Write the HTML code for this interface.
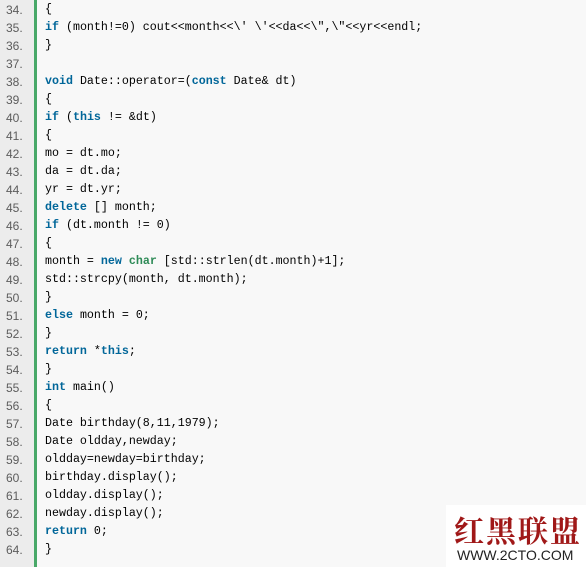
<!DOCTYPE html>
<html><head><meta charset="utf-8"><style>
html,body{margin:0;padding:0;width:586px;height:567px;overflow:hidden;background:#f8f8f8;}
.g{position:absolute;left:0;top:0;width:34px;height:567px;background:#ececec;}
.b{position:absolute;left:34px;top:0;width:3px;height:567px;background:#48a868;}
.c{position:absolute;left:0;top:1px;font:11.65px "Liberation Mono",monospace;}
.l{height:18px;line-height:18px;white-space:pre;position:relative;}
.n{position:absolute;left:6px;color:#5c5c5c;font-family:"Liberation Sans",sans-serif;font-size:12px;}
.t{position:absolute;left:45px;color:#000;}
.k{color:#006699;font-weight:bold;}
.y{color:#2e8b57;font-weight:bold;}
.s{color:#000;}
.wm{position:absolute;left:446px;top:505px;width:140px;height:62px;background:#fff;}
.wm1{position:absolute;left:8px;top:2px;font:bold 30px "Noto Serif CJK SC",serif;color:#a01818;letter-spacing:2px;}
.wm2{position:absolute;left:11px;top:42px;font:14px "Liberation Sans",sans-serif;color:#222;}
</style></head><body>
<div class="g"></div><div class="b"></div>
<div class="c">
<div class="l"><span class="n">34.</span><span class="t">{</span></div>
<div class="l"><span class="n">35.</span><span class="t"><span class="k">if</span> (month!=0) cout&lt;&lt;month&lt;&lt;<span class="s">\' \'</span>&lt;&lt;da&lt;&lt;<span class="s">\",\"</span>&lt;&lt;yr&lt;&lt;endl;</span></div>
<div class="l"><span class="n">36.</span><span class="t">}</span></div>
<div class="l"><span class="n">37.</span><span class="t"></span></div>
<div class="l"><span class="n">38.</span><span class="t"><span class="k">void</span> Date::operator=(<span class="k">const</span> Date&amp; dt)</span></div>
<div class="l"><span class="n">39.</span><span class="t">{</span></div>
<div class="l"><span class="n">40.</span><span class="t"><span class="k">if</span> (<span class="k">this</span> != &amp;dt)</span></div>
<div class="l"><span class="n">41.</span><span class="t">{</span></div>
<div class="l"><span class="n">42.</span><span class="t">mo = dt.mo;</span></div>
<div class="l"><span class="n">43.</span><span class="t">da = dt.da;</span></div>
<div class="l"><span class="n">44.</span><span class="t">yr = dt.yr;</span></div>
<div class="l"><span class="n">45.</span><span class="t"><span class="k">delete</span> [] month;</span></div>
<div class="l"><span class="n">46.</span><span class="t"><span class="k">if</span> (dt.month != 0)</span></div>
<div class="l"><span class="n">47.</span><span class="t">{</span></div>
<div class="l"><span class="n">48.</span><span class="t">month = <span class="k">new</span> <span class="y">char</span> [std::strlen(dt.month)+1];</span></div>
<div class="l"><span class="n">49.</span><span class="t">std::strcpy(month, dt.month);</span></div>
<div class="l"><span class="n">50.</span><span class="t">}</span></div>
<div class="l"><span class="n">51.</span><span class="t"><span class="k">else</span> month = 0;</span></div>
<div class="l"><span class="n">52.</span><span class="t">}</span></div>
<div class="l"><span class="n">53.</span><span class="t"><span class="k">return</span> *<span class="k">this</span>;</span></div>
<div class="l"><span class="n">54.</span><span class="t">}</span></div>
<div class="l"><span class="n">55.</span><span class="t"><span class="k">int</span> main()</span></div>
<div class="l"><span class="n">56.</span><span class="t">{</span></div>
<div class="l"><span class="n">57.</span><span class="t">Date birthday(8,11,1979);</span></div>
<div class="l"><span class="n">58.</span><span class="t">Date oldday,newday;</span></div>
<div class="l"><span class="n">59.</span><span class="t">oldday=newday=birthday;</span></div>
<div class="l"><span class="n">60.</span><span class="t">birthday.display();</span></div>
<div class="l"><span class="n">61.</span><span class="t">oldday.display();</span></div>
<div class="l"><span class="n">62.</span><span class="t">newday.display();</span></div>
<div class="l"><span class="n">63.</span><span class="t"><span class="k">return</span> 0;</span></div>
<div class="l"><span class="n">64.</span><span class="t">}</span></div>
</div>
<div class="wm"><div class="wm1">红黑联盟</div><div class="wm2">WWW.2CTO.COM</div></div>
</body></html>
